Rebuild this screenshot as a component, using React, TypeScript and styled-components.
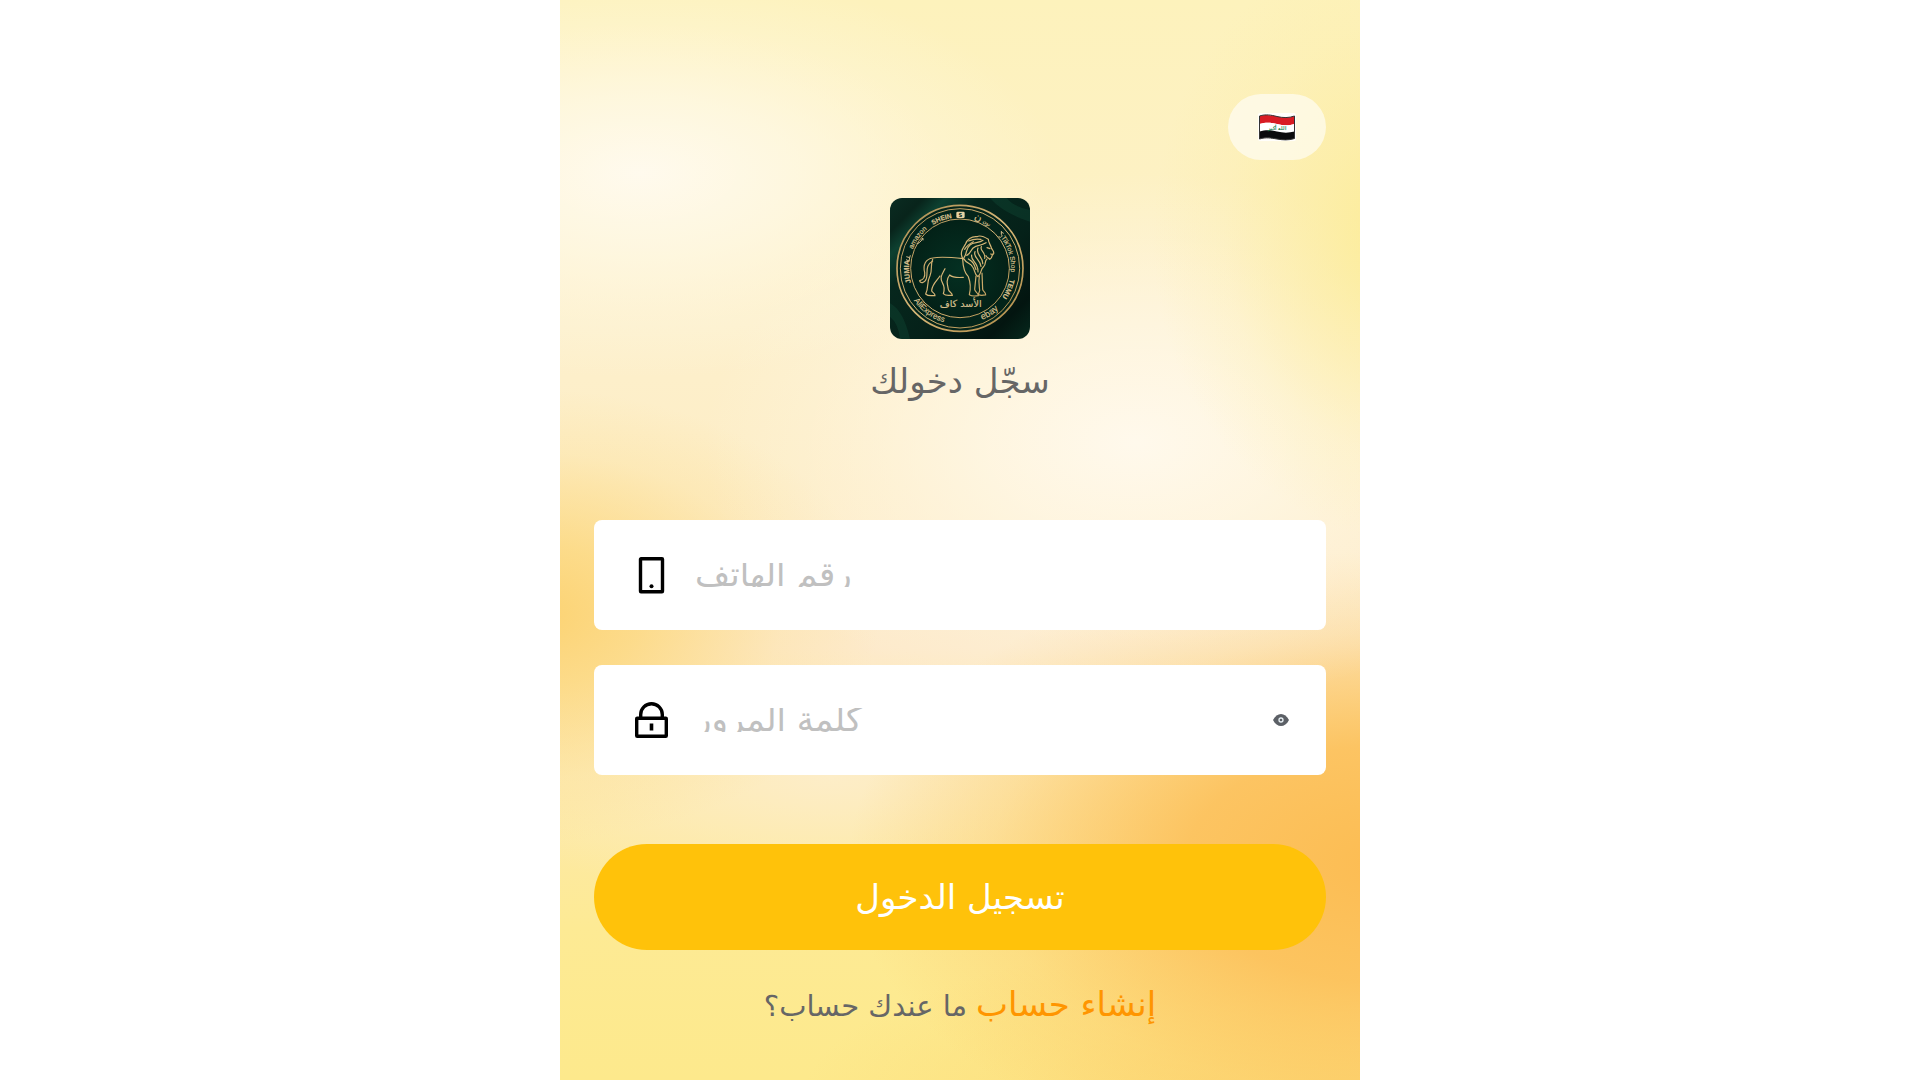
import React, { useState } from "react";
import styled, { createGlobalStyle } from "styled-components";

const GlobalStyle = createGlobalStyle`
  *, *::before, *::after { box-sizing: border-box; }
  body {
    margin: 0;
    background: #fff;
    font-family: "DejaVu Sans", "Noto Sans", sans-serif;
    color: #666;
  }
`;

const Page = styled.main`
  width: 100%;
  max-width: 800px;
  min-height: 100vh;
  margin: 0 auto;
  padding: 94px 34px 48px;
  display: flex;
  flex-direction: column;
  background:
    radial-gradient(ellipse 52% 19% at 10% 16%, rgba(255, 251, 242, 0.9) 0%, rgba(255, 250, 236, 0.65) 38%, rgba(255, 250, 234, 0.25) 72%, rgba(255, 250, 234, 0) 100%),
    radial-gradient(ellipse 32% 28% at 106% 22%, #fcec94 0%, rgba(252, 236, 154, 0.65) 35%, rgba(252, 236, 154, 0.2) 72%, rgba(252, 236, 154, 0) 100%),
    radial-gradient(ellipse 54% 25% at 72% 41%, #fff9ec 0%, rgba(255, 248, 232, 0.75) 35%, rgba(255, 247, 230, 0.25) 75%, rgba(255, 247, 230, 0) 100%),
    radial-gradient(ellipse 44% 21% at -4% 57%, #fcd270 0%, rgba(252, 214, 118, 0.75) 32%, rgba(252, 218, 128, 0.22) 72%, rgba(252, 218, 128, 0) 100%),
    radial-gradient(ellipse 68% 29% at 104% 80%, #fcbc52 0%, rgba(252, 192, 90, 0.9) 38%, rgba(252, 200, 102, 0.35) 74%, rgba(252, 206, 114, 0) 100%),
    radial-gradient(ellipse 46% 12% at 34% 72%, rgba(253, 238, 206, 0.8) 0%, rgba(253, 237, 200, 0.35) 60%, rgba(253, 236, 196, 0) 100%),
    radial-gradient(ellipse 70% 16% at 100% 102%, rgba(252, 208, 104, 0.9) 0%, rgba(252, 216, 116, 0.4) 60%, rgba(252, 216, 116, 0) 100%),
    linear-gradient(180deg, #fdf2bc 0%, #fdf1c4 18%, #fdf0cc 30%, #fdedc6 45%, #fdeacb 60%, #fde9a8 74%, #fdea94 86%, #fde98c 100%);
`;

const LanguageButton = styled.button`
  align-self: flex-end;
  width: 98px;
  height: 66px;
  padding: 0;
  border: 0;
  border-radius: 33px;
  background: rgba(255, 255, 255, 0.6);
  display: flex;
  align-items: center;
  justify-content: center;
  cursor: pointer;
`;

const Brand = styled.header`
  margin-top: 38px;
  display: flex;
  flex-direction: column;
  align-items: center;
  gap: 20px;
`;

const LogoFrame = styled.div`
  width: 140px;
  height: 141px;
  border-radius: 12px;
  overflow: hidden;
  svg { display: block; width: 100%; height: 100%; }
`;

const Title = styled.h1`
  margin: 0;
  font-size: 34px;
  line-height: 44px;
  font-weight: 400;
`;

const Form = styled.form`
  margin-top: 117px;
  display: flex;
  flex-direction: column;
`;

const Field = styled.div`
  height: 110px;
  padding: 0 37px;
  border-radius: 8px;
  background: #fff;
  display: flex;
  align-items: center;
  gap: 24px;
  & + & { margin-top: 35px; }
`;

const FieldLabel = styled.label`
  width: 40px;
  height: 40px;
  flex: none;
  svg { display: block; }
`;

const TextInput = styled.input`
  flex: 1;
  min-width: 0;
  height: 42px;
  padding: 0 0 2px;
  border: 0;
  outline: 0;
  background: transparent;
  font-family: inherit;
  font-size: 34px;
  color: #333;
  direction: ltr;
  clip-path: inset(9px 0);
  &::placeholder { color: #c0c0c0; opacity: 1; }
`;

const EyeButton = styled.button`
  padding: 0;
  border: 0;
  background: none;
  cursor: pointer;
  svg { display: block; }
`;

const SubmitButton = styled.button`
  margin-top: 69px;
  height: 106px;
  border: 0;
  border-radius: 53px;
  background: #ffc20a;
  color: #fff;
  font-family: inherit;
  font-size: 34px;
  cursor: pointer;
`;

const Footer = styled.p`
  margin: 32px 0 0;
  display: flex;
  justify-content: center;
  align-items: baseline;
  gap: 9px;
  font-size: 29px;
  line-height: 44px;
`;

const SignUpLink = styled.a`
  color: #ff9500;
  font-size: 34px;
  text-decoration: none;
`;

function IraqFlag() {
  return (
    <svg width="38" height="28" viewBox="0 0 38 28" aria-hidden="true">
      <rect width="38" height="28" rx="2" fill="#fff" fillOpacity="0.85" />
      <path d="M1.500 3C8 1 13 2 19 3.500S31 5 36.500 3V11C30 13 25 12.500 19 11S8 9 1.500 11Z" fill="#d81c24" />
      <path d="M1.500 11C8 9 13 9.500 19 11S31 13 36.500 11V19C30 20.500 25 20 19 19S8 17.500 1.500 19Z" fill="#fff" />
      <path d="M1.500 18.500C8 16.500 13 17 19 18.500S31 20 36.500 18.500V25.500C30 27.500 25 27 19 26S8 24 1.500 26Z" fill="#0b0b0d" />
      <path d="M1.500 3C8 1 13 2 19 3.500S31 5 36.500 3V25.500C30 27.500 25 27 19 26S8 24 1.500 26Z" fill="none" stroke="#333" strokeWidth="1" />
      <text x="19" y="17" textAnchor="middle" fontSize="5" fontWeight="700" fill="#16804a">الله أكبر</text>
    </svg>
  );
}

function LionLogo() {
  return (
    <svg viewBox="30 24 420 423" role="img" aria-label="الأسد كاف">
      <defs>
        <linearGradient id="cloth" x1="0" y1="0" x2="1" y2="1">
          <stop offset="0" stopColor="#0a2c22" />
          <stop offset="0.12" stopColor="#08241b" />
          <stop offset="0.2" stopColor="#0d4030" />
          <stop offset="0.32" stopColor="#06271d" />
          <stop offset="0.6" stopColor="#052119" />
          <stop offset="0.85" stopColor="#031510" />
          <stop offset="1" stopColor="#06291d" />
        </linearGradient>
        <radialGradient id="medal">
          <stop offset="0" stopColor="#043022" />
          <stop offset="1" stopColor="#032117" />
        </radialGradient>
        <linearGradient id="gold" gradientUnits="userSpaceOnUse" x1="60" y1="50" x2="420" y2="420">
          <stop offset="0" stopColor="#a88a50" />
          <stop offset="0.5" stopColor="#d8b878" />
          <stop offset="1" stopColor="#ac8846" />
        </linearGradient>
        <path id="ring" d="M240 388A153 153 0 0 1 240 82A153 153 0 0 1 240 388" />
        <path id="ringBelow" d="M71 235A169 169 0 0 0 409 235" />
      </defs>
      <rect x="30" y="24" width="420" height="423" fill="url(#cloth)" />
      <path d="M330 24Q370 70 450 95V60Q400 50 380 24ZM30 340Q70 360 90 447H60Q55 400 30 380Z" fill="#145540" opacity="0.3" />
      <circle cx="240" cy="235" r="189" fill="#03241a" stroke="url(#gold)" strokeWidth="5" />
      <circle cx="240" cy="235" r="179" fill="none" stroke="url(#gold)" strokeWidth="3" />
      <circle cx="240" cy="235" r="148" fill="url(#medal)" stroke="url(#gold)" strokeWidth="3" />
      <g fill="#d8c08e" stroke="#d8c08e" strokeWidth="0.500" fontFamily="Liberation Sans, DejaVu Sans, sans-serif" fontSize="23" textAnchor="middle">
        <text fontWeight="700" fontSize="20"><textPath href="#ring" startOffset="44.3%">SHEIN</textPath></text>
        <text fontSize="21"><textPath href="#ring" startOffset="35%">amazon</textPath></text>
        <text fontWeight="700" fontSize="22"><textPath href="#ring" startOffset="24%">JUMIA</textPath></text>
        <text fontSize="30"><textPath href="#ring" startOffset="55.500%">ن</textPath></text>
        <text fontSize="15"><textPath href="#ring" startOffset="58.500%">نون</textPath></text>
        <text fontSize="20"><textPath href="#ring" startOffset="70.500%">TikTok Shop</textPath></text>
        <text fontWeight="700" fontSize="21"><textPath href="#ring" startOffset="81.500%">TEMU</textPath></text>
        <text fontSize="24"><textPath href="#ringBelow" startOffset="30%">AliExpress</textPath></text>
        <text fontSize="27"><textPath href="#ringBelow" startOffset="68.500%">ebay</textPath></text>
        <text x="242" y="352" fontSize="29" fontFamily="DejaVu Sans, sans-serif">الأسد كاف</text>
      </g>
      <rect x="229" y="65" width="25" height="19" rx="4" fill="#e8d3a4" />
      <text x="241" y="80" textAnchor="middle" fontSize="16" fontWeight="700" fill="#0a3024">S</text>
      <g fill="none" stroke="#d8c08e" strokeWidth="3">
        <path d="M110 160Q117 163 128 146M125 147l4-2v6M79 200l10 3-2 10-9-4M89 203l2-7M356 138a5 5 0 1 0 8-5v-9q3 6 7 6" />
        <g stroke="url(#gold)" strokeWidth="3.600" strokeLinecap="round" strokeLinejoin="round">
          <path d="M158 204C182 199 214 202 250 206M158 204C137 207 128 224 134 247C136 262 131 269 119 272C120 281 134 280 139 266C145 247 133 228 158 213" />
          <path d="M158 208C150 229 158 239 150 257C139 277 147 294 137 312C145 320 155 316 165 317C166 308 154 308 155 301C157 282 169 274 180 258" />
          <path d="M195 236C185 255 178 264 188 280C195 292 194 299 190 311C198 319 207 315 217 316C216 307 207 307 205 298C201 280 198 269 209 255C219 264 237 263 250 262" />
          <path d="M248 208C249 232 252 248 265 260C272 278 272 298 268 314C278 321 288 317 295 317C294 307 284 306 284 298L288 258M298 259C294 278 299 294 299 302L295 314C305 318 309 315 317 315C318 306 309 305 308 298L306 249" />
          <path d="M249 207C237 188 250 173 256 163C260 149 275 138 291 140C301 134 314 141 325 148C325 157 330 161 334 173C335 180 343 181 341 191C333 192 340 203 329 208C326 202 320 204 318 197" />
          <path d="M252 203C263 186 256 177 270 165C280 155 297 161 309 151M260 196C276 191 268 176 287 169C303 166 306 165 318 158M251 206C261 223 270 217 278 231C286 241 281 252 294 260C305 250 301 239 310 231C320 223 312 214 321 207" />
          <path d="M265 207C281 216 283 224 288 239M275 195C271 213 295 216 294 246M285 185C278 201 300 208 303 229M294 174C285 192 310 201 308 221M304 170C298 183 318 185 314 205M266 153Q283 145 303 148M254 178Q262 164 280 155M321 173L330 176M332 192L339 194" />
        </g>
      </g>
    </svg>
  );
}

function PhoneIcon() {
  return (
    <svg width="40" height="40" viewBox="0 0 40 40" aria-hidden="true">
      <rect x="9.500" y="3.700" width="22" height="33" rx="0.500" fill="none" stroke="#000" strokeWidth="3.400" />
      <circle cx="20.500" cy="31.200" r="2" />
    </svg>
  );
}

function LockIcon() {
  return (
    <svg width="40" height="40" viewBox="0 0 40 40" aria-hidden="true">
      <g fill="none" stroke="#000" strokeWidth="3.400">
        <rect x="5.700" y="18.200" width="29.600" height="18" rx="0.500" />
        <path d="M9.700 18V14.500a10.800 10.800 0 0 1 21.600 0V18" />
      </g>
      <path d="M18.700 23.500h3.600v7h-3.600z" />
    </svg>
  );
}

function EyeIcon() {
  return (
    <svg width="16" height="12" viewBox="0 0 16 12" aria-hidden="true">
      <path d="M0 6C2 2 5 0 8 0s6 2 8 6c-2 4-5 6-8 6S2 10 0 6Z" fill="#5c6066" />
      <circle cx="8" cy="6" r="2" fill="none" stroke="#e8f0f4" strokeWidth="1.300" />
    </svg>
  );
}

export default function App() {
  const [visible, setVisible] = useState(false);
  return (
    <>
      <GlobalStyle />
      <Page lang="ar">
        <LanguageButton type="button" aria-label="العراق">
          <IraqFlag />
        </LanguageButton>
        <Brand>
          <LogoFrame>
            <LionLogo />
          </LogoFrame>
          <Title>سجّل دخولك</Title>
        </Brand>
        <Form onSubmit={(e: React.FormEvent) => e.preventDefault()}>
          <Field>
            <FieldLabel htmlFor="phone" aria-label="رقم الهاتف">
              <PhoneIcon />
            </FieldLabel>
            <TextInput id="phone" type="tel" placeholder="رقم الهاتف" />
          </Field>
          <Field>
            <FieldLabel htmlFor="password" aria-label="كلمة المرور">
              <LockIcon />
            </FieldLabel>
            <TextInput id="password" type={visible ? "text" : "password"} placeholder="كلمة المرور" />
            <EyeButton type="button" aria-label="إظهار كلمة المرور" onClick={() => setVisible(!visible)}>
              <EyeIcon />
            </EyeButton>
          </Field>
          <SubmitButton type="submit">تسجيل الدخول</SubmitButton>
        </Form>
        <Footer>
          <span dir="rtl">ما عندك حساب؟</span>
          <SignUpLink href="#register">إنشاء حساب</SignUpLink>
        </Footer>
      </Page>
    </>
  );
}
